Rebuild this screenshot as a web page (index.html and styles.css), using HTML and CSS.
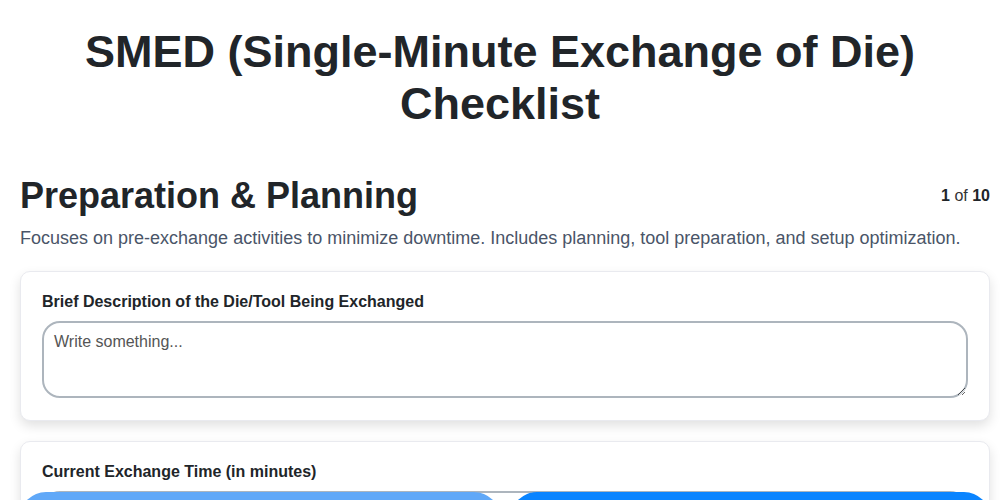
FILE: index.html
```html
<!DOCTYPE html>
<html lang="en">
<head>
  <meta charset="UTF-8" />
  <meta name="viewport" content="width=device-width, initial-scale=1.0"/>
  <title>SMED Checklist</title>
  <link rel="stylesheet" href="styles.css">
</head>
<body>

  <!-- Page Title -->
  <h1 class="page-title">SMED (Single-Minute Exchange of Die) Checklist</h1>

  <!-- Current Section -->
  <div class="section">
    <div class="section-head">
      <h2>Preparation &amp; Planning</h2>
      <div class="step-count"><b>1</b> of <b>10</b></div>
    </div>
    <p class="section-desc">Focuses on pre-exchange activities to minimize downtime. Includes planning, tool preparation, and setup optimization.</p>

    <div class="card">
      <label for="dieDesc">Brief Description of the Die/Tool Being Exchanged</label>
      <textarea id="dieDesc" rows="3" placeholder="Write something..."></textarea>
    </div>

    <div class="card">
      <label for="exchangeTime">Current Exchange Time (in minutes)</label>
      <input type="number" id="exchangeTime" />
    </div>
  </div>

  <!-- Step Navigation -->
  <div class="step-nav">
    <button class="btn btn-prev" disabled>Previous</button>
    <button class="btn btn-next">Next</button>
  </div>

</body>
</html>
```

FILE: styles.css
```css
/* General Page Styles */
body {
  margin: 0;
  padding-bottom: 80px;
  font-family: "Liberation Sans", Arial, Helvetica, sans-serif;
  background: #fff;
  color: #212529;
  font-size: 16px;
}

.page-title {
  margin: 26px 0 0;
  padding: 0 20px;
  text-align: center;
  font-size: 45px;
  line-height: 52px;
  font-weight: bold;
  color: #212529;
}

/* Section Header */
.section {
  margin-top: 44px;
  padding: 0 10px 0 20px;
}

.section-head {
  display: flex;
  justify-content: space-between;
  align-items: center;
}

.section-head h2 {
  margin: 0;
  font-size: 36px;
  line-height: 1.2;
}

.step-count {
  font-size: 16px;
  color: #333;
}

.step-count b {
  color: #212529;
}

.section-desc {
  margin: 9px 0 20px;
  font-size: 18px;
  line-height: 1.4;
  color: #4a5568;
}

/* Question Cards */
.card {
  background: #fff;
  border: 1px solid #e9eaef;
  border-radius: 10px;
  padding: 21px 21px 22px;
  margin-bottom: 20px;
  box-shadow: 0 5px 12px rgba(0, 0, 0, 0.12);
}

.card label {
  display: block;
  font-weight: bold;
  font-size: 16px;
  margin-bottom: 10px;
}

.card textarea,
.card input {
  display: block;
  box-sizing: border-box;
  width: 100%;
  padding: 10px;
  font-family: inherit;
  font-size: 16px;
  border: 2px solid #adb5bd;
  border-radius: 18px;
  color: #212529;
}

.card textarea {
  height: 77px;
}

.card input {
  height: 46px;
}

.card textarea::placeholder {
  color: #555;
}

/* Bottom Navigation */
.step-nav {
  position: fixed;
  left: 20px;
  right: 10px;
  bottom: -44px;
  display: flex;
  gap: 11px;
}

.btn {
  flex: 1;
  height: 52px;
  border: none;
  border-radius: 26px;
  font-size: 18px;
  font-weight: bold;
  color: #fff;
  cursor: pointer;
}

.btn-prev {
  background: #60a8f8;
}

.btn-next {
  background: #0a84ff;
}
```
